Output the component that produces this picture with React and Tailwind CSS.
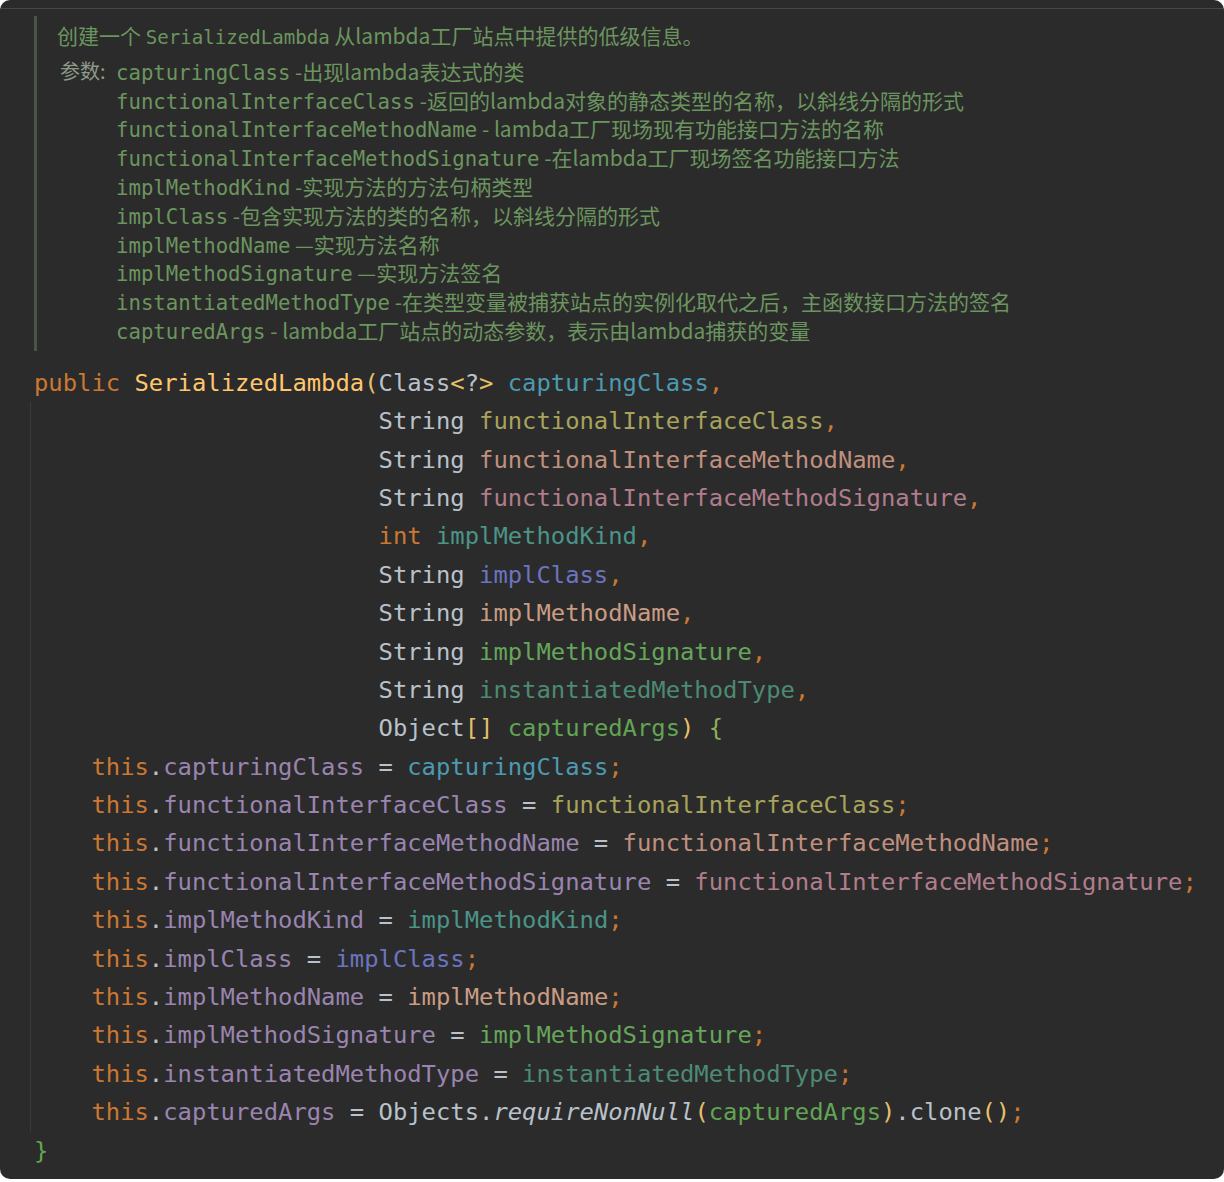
import React from "react";

const K = "text-[#cc7832]";
const D = "text-[#b9c1ca]";
const Y = "text-[#e6c06a]";
const P = "text-[#9a84b0]";
const G = "text-[#62a455]";

const C = {
  capturingClass: "text-[#4d9ab0]",
  functionalInterfaceClass: "text-[#a8a35c]",
  functionalInterfaceMethodName: "text-[#c0907f]",
  functionalInterfaceMethodSignature: "text-[#b07d8c]",
  implMethodKind: "text-[#4b9489]",
  implClass: "text-[#6b74c0]",
  implMethodName: "text-[#c99c84]",
  implMethodSignature: "text-[#65a65a]",
  instantiatedMethodType: "text-[#4d8a73]",
  capturedArgs: "text-[#62a455]",
};

const params = [
  ["String", "functionalInterfaceClass"],
  ["String", "functionalInterfaceMethodName"],
  ["String", "functionalInterfaceMethodSignature"],
  ["int", "implMethodKind"],
  ["String", "implClass"],
  ["String", "implMethodName"],
  ["String", "implMethodSignature"],
  ["String", "instantiatedMethodType"],
];

const fields = [
  "capturingClass",
  "functionalInterfaceClass",
  "functionalInterfaceMethodName",
  "functionalInterfaceMethodSignature",
  "implMethodKind",
  "implClass",
  "implMethodName",
  "implMethodSignature",
  "instantiatedMethodType",
];

const docs = [
  ["capturingClass", " -出现lambda表达式的类"],
  ["functionalInterfaceClass", " -返回的lambda对象的静态类型的名称，以斜线分隔的形式"],
  ["functionalInterfaceMethodName", " - lambda工厂现场现有功能接口方法的名称"],
  ["functionalInterfaceMethodSignature", " -在lambda工厂现场签名功能接口方法"],
  ["implMethodKind", " -实现方法的方法句柄类型"],
  ["implClass", " -包含实现方法的类的名称，以斜线分隔的形式"],
  ["implMethodName", " —实现方法名称"],
  ["implMethodSignature", " —实现方法签名"],
  ["instantiatedMethodType", " -在类型变量被捕获站点的实例化取代之后，主函数接口方法的签名"],
  ["capturedArgs", " - lambda工厂站点的动态参数，表示由lambda捕获的变量"],
];

function Desc({ text }) {
  return (
    <span className="font-['Noto_Sans_CJK_SC',sans-serif] text-[21px]">{text}</span>
  );
}

function Line({ children }) {
  return (
    <div className="h-[38.4px] leading-[38.4px] whitespace-pre">{children}</div>
  );
}

export default function App() {
  const pad = " ".repeat(24);
  return (
    <div className="w-[1224px] h-[1182px] bg-white">
      <div className="h-[1179px] bg-[#2b2b2b] rounded-[10px] overflow-hidden">
        <div className="h-[9px] border-b border-[#474747] rounded-t-[10px]" />

        {/* doc comment */}
        <div className="ml-[34px] mt-[7px] border-l-[3px] border-[#4a5645] pl-[20px] pt-[5px] pb-[6px] text-[#6b955f]">
          <div className="h-[28.8px] leading-[28.8px] whitespace-pre">
            <span className="font-['Noto_Sans_CJK_SC',sans-serif] text-[21px]">创建一个 </span>
            <span className="font-['DejaVu_Sans_Mono',monospace] text-[19.1px]">SerializedLambda</span>
            <Desc text=" 从lambda工厂站点中提供的低级信息。" />
          </div>
          <div className="mt-[7px] flex">
            <div className="w-[59px] pl-[3px] h-[28.8px] leading-[28.8px] text-[#8d9a89] font-['Noto_Sans_CJK_SC',sans-serif] text-[20px]">
              参数:
            </div>
            <div className="flex flex-col">
              {docs.map(([n, d]) => (
                <div key={n} className="h-[28.8px] leading-[28.8px] whitespace-pre">
                  <span className="font-['DejaVu_Sans_Mono',monospace] text-[20.7px]">{n}</span>
                  <Desc text={d} />
                </div>
              ))}
            </div>
          </div>
        </div>

        {/* code */}
        <div className="mt-[13px] pl-[34px] font-['DejaVu_Sans_Mono',monospace] text-[23.85px] text-[#b9c1ca]">
          <Line>
            <span className={K}>public </span>
            <span className="text-[#ffc66d]">SerializedLambda</span>
            <span className={Y}>(</span>
            <span className={D}>Class</span>
            <span className={Y}>{"<"}</span>
            <span className={D}>?</span>
            <span className={Y}>{">"}</span>
            <span> </span>
            <span className={C.capturingClass}>capturingClass</span>
            <span className={K}>,</span>
          </Line>
          <div className="-ml-[4px] pl-[3px] border-l border-[#3b3b3b]">
            {params.map(([t, n]) => (
              <Line key={n}>
                <span>{pad}</span>
                <span className={t === "int" ? K : D}>{t}</span>
                <span> </span>
                <span className={C[n]}>{n}</span>
                <span className={K}>,</span>
              </Line>
            ))}
            <Line>
              <span>{pad}</span>
              <span className={D}>Object</span>
              <span className={Y}>[]</span>
              <span> </span>
              <span className={G}>capturedArgs</span>
              <span className={Y}>)</span>
              <span> </span>
              <span className="text-[#8fae5a]">{"{"}</span>
            </Line>
            {fields.map((f) => (
              <Line key={"f" + f}>
                <span>{"    "}</span>
                <span className={K}>this</span>
                <span className={D}>.</span>
                <span className={P}>{f}</span>
                <span className={D}>{" = "}</span>
                <span className={C[f]}>{f}</span>
                <span className={K}>;</span>
              </Line>
            ))}
            <Line>
              <span>{"    "}</span>
              <span className={K}>this</span>
              <span className={D}>.</span>
              <span className={P}>capturedArgs</span>
              <span className={D}>{" = "}</span>
              <span className={D}>Objects.</span>
              <span className={D + " italic"}>requireNonNull</span>
              <span className={Y}>(</span>
              <span className={G}>capturedArgs</span>
              <span className={Y}>)</span>
              <span className={D}>.clone</span>
              <span className={Y}>()</span>
              <span className={K}>;</span>
            </Line>
          </div>
          <Line>
            <span className="text-[#62a455]">{"}"}</span>
          </Line>
        </div>
      </div>
    </div>
  );
}
